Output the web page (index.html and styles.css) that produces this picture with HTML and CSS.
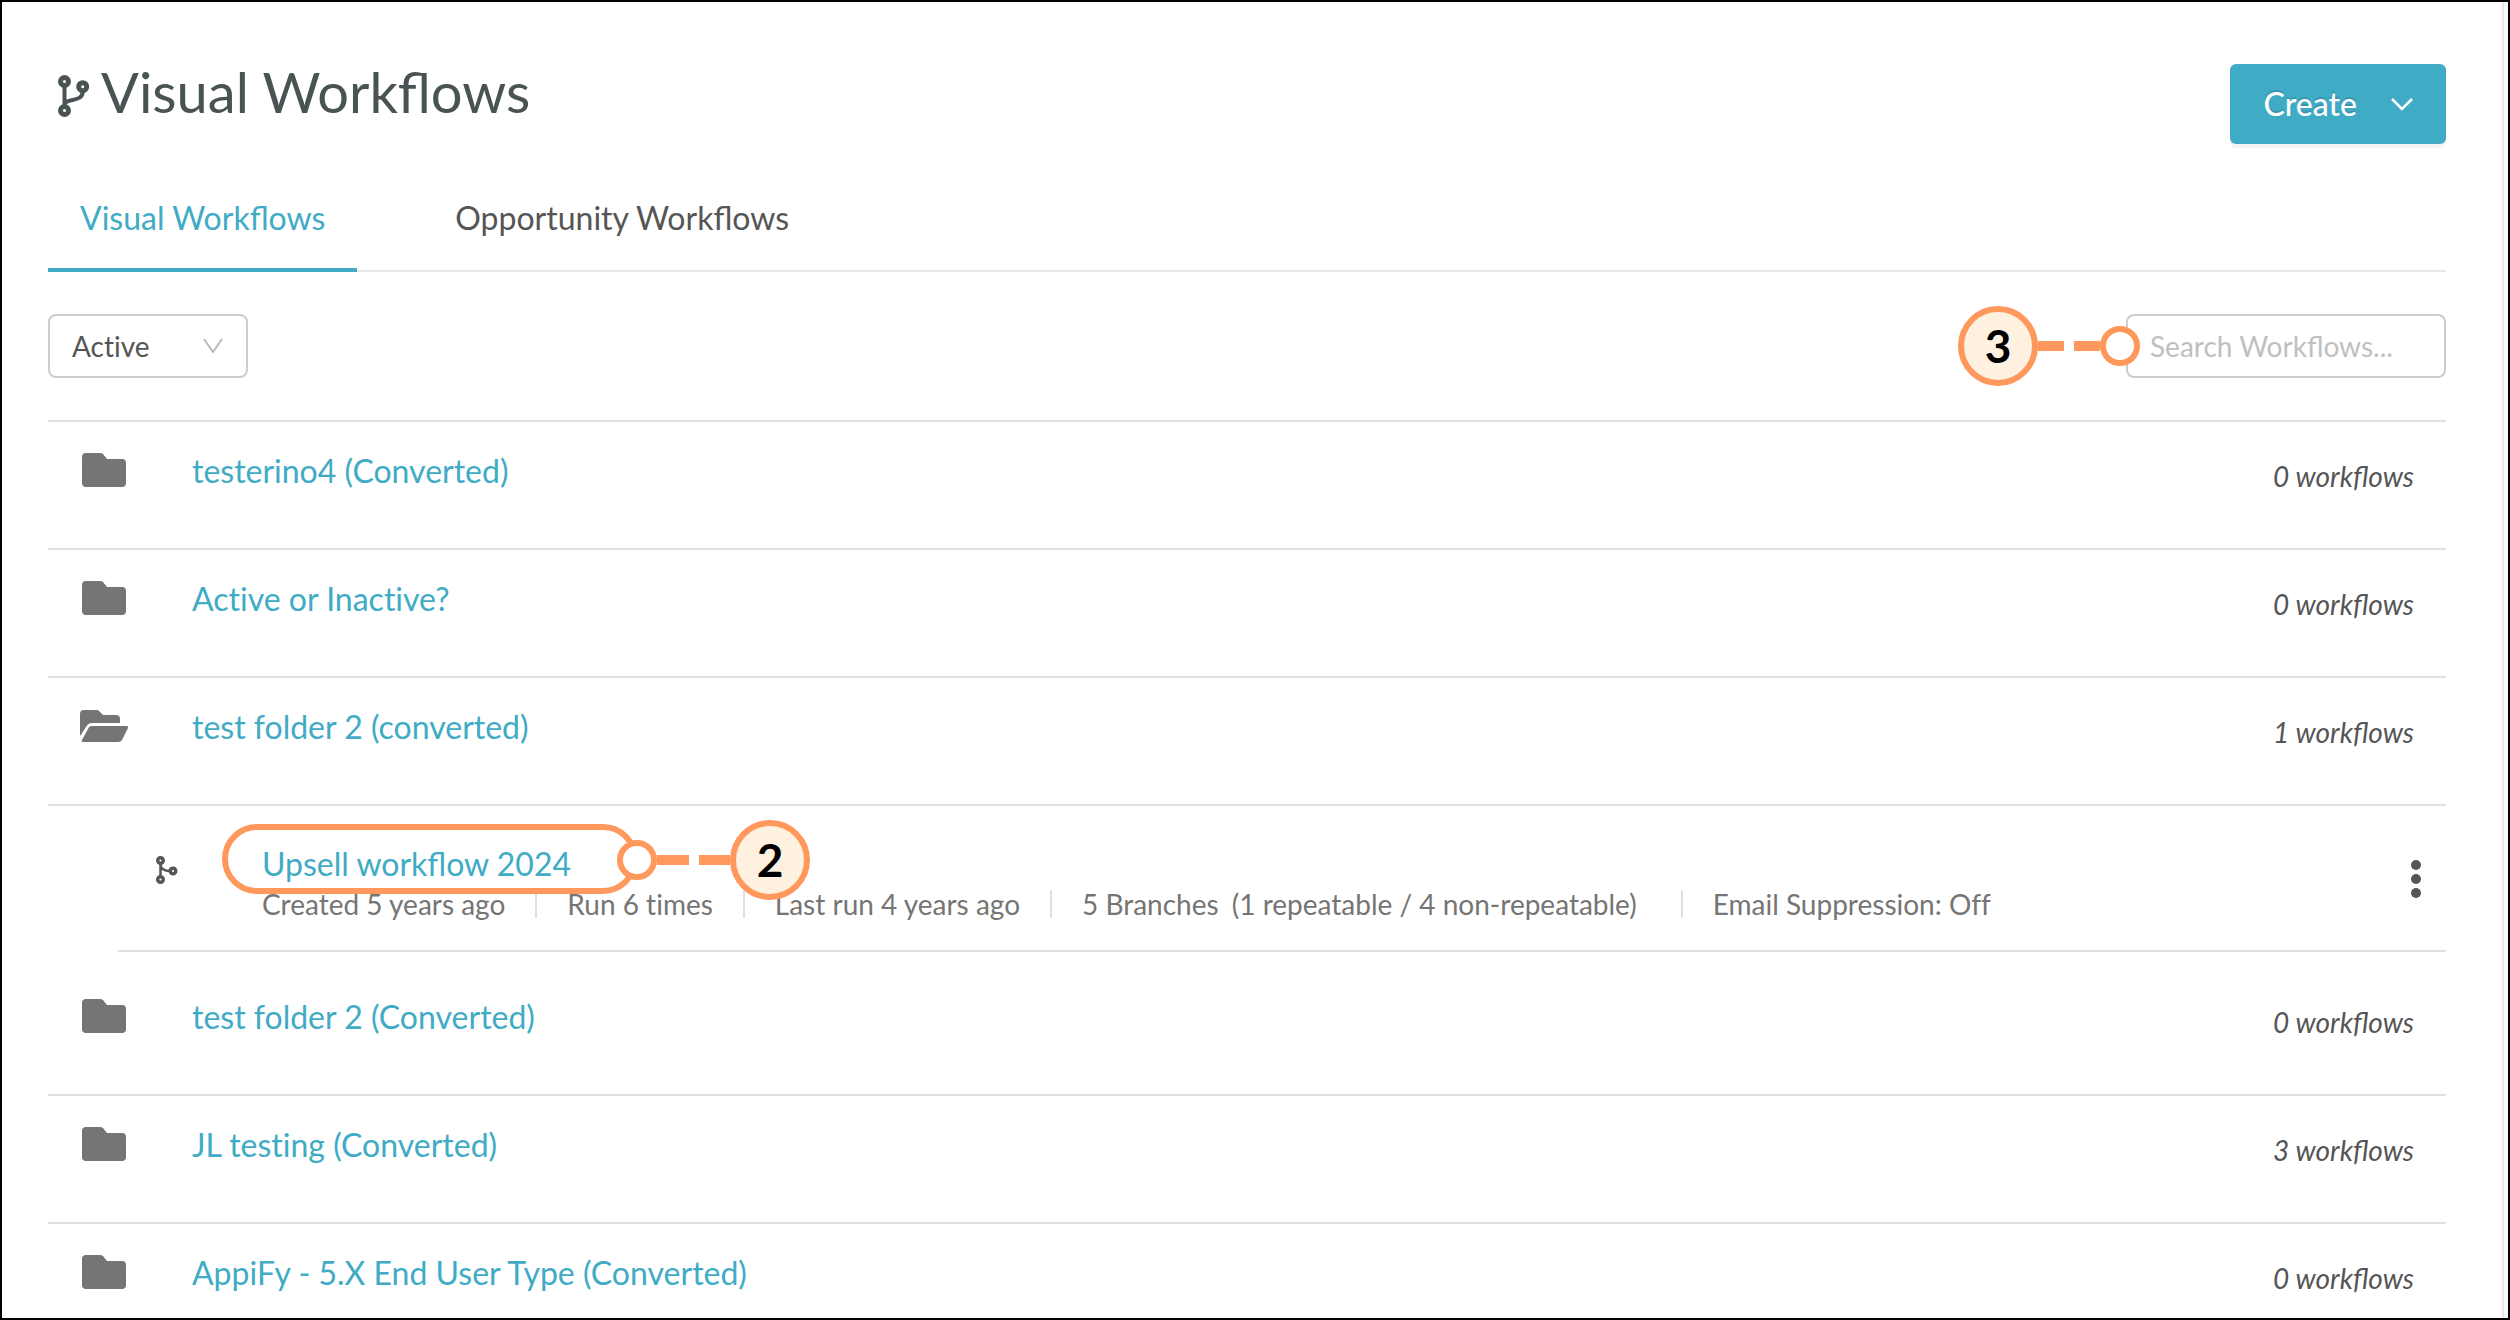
FILE: index.html
```html
<!DOCTYPE html>
<html lang="en">
<head>
<meta charset="utf-8">
<title>Visual Workflows</title>
<link rel="stylesheet" href="styles.css">
</head>
<body>
<svg class="sprite" aria-hidden="true">
  <symbol id="folder" viewBox="0 0 44 34"><path d="M4 0h14q2 0 3 1l4 5h15q4 0 4 4v20q0 4-4 4H4q-4 0-4-4V4q0-4 4-4z"/></symbol>
  <symbol id="folder-open" viewBox="0 0 48 32"><path d="M0 26V4q0-4 4-4h13q1 0 2 1l4 4h13q4 0 4 4v4H12q-4 0-6 4z"/><path d="M12 16h34q3 0 2 2l-6 12q-1 2-4 2H3q-2 0-1-2l6-11q1-3 4-3z"/></symbol>
</svg>
<main class="page">
  <header class="header">
    <h1 class="title">
      <svg class="title-icon" viewBox="0 0 32 42" aria-hidden="true"><g fill="none" stroke="currentColor"><circle cx="6.500" cy="6.500" r="4" stroke-width="5"/><circle cx="6.500" cy="35.500" r="4" stroke-width="5"/><circle cx="24.700" cy="11.700" r="4" stroke-width="5"/><path d="M6.500 11v20M24.700 16C25 27 12 23 6.500 28" stroke-width="4"/></g></svg>
      Visual Workflows
    </h1>
    <button class="create" type="button">Create
      <svg class="create-arrow" viewBox="0 0 24 14" aria-hidden="true"><path d="M2 2l10 10L22 2" fill="none" stroke="currentColor" stroke-width="2.500"/></svg>
    </button>
  </header>
  <nav class="tabs">
    <a class="tab tab-active" href="#visual">Visual Workflows</a>
    <a class="tab" href="#opportunity">Opportunity Workflows</a>
  </nav>
  <div class="filters">
    <div class="select-wrap">
      <select class="status" aria-label="Status"><option>Active</option><option>Inactive</option></select>
      <svg class="select-arrow" viewBox="0 0 22 16" aria-hidden="true"><path d="M2 1l9 13L20 1" fill="none" stroke="currentColor" stroke-width="2"/></svg>
    </div>
    <div class="search-wrap">
      <input class="search" type="text" aria-label="Search workflows" placeholder="Search Workflows...">
      <div class="callout callout-search"><span class="badge">3</span><span class="dashes"></span><span class="ring"></span></div>
    </div>
  </div>
  <ul class="list">
    <li class="row"><svg class="folder"><use href="#folder"/></svg><a class="name" href="#f1">testerino4 (Converted)</a><span class="count">0 workflows</span></li>
    <li class="row"><svg class="folder"><use href="#folder"/></svg><a class="name" href="#f2">Active or Inactive?</a><span class="count">0 workflows</span></li>
    <li class="row row-open"><svg class="folder"><use href="#folder-open"/></svg><a class="name" href="#f3">test folder 2 (converted)</a><span class="count">1 workflows</span></li>
    <li class="child">
      <svg class="branch" viewBox="0 0 22 28" aria-hidden="true"><g fill="none" stroke="currentColor"><circle cx="4.500" cy="4.500" r="2.800" stroke-width="3.400"/><circle cx="4.500" cy="23.500" r="2.800" stroke-width="3.400"/><circle cx="17" cy="15" r="2.800" stroke-width="3.400"/><path d="M4.500 7v14M4.500 8c0 5 4 7 10 7" stroke-width="2.500"/></g></svg>
      <div class="details">
        <a class="name" href="#w1">Upsell workflow 2024</a>
        <div class="meta">
          <span>Created 5 years ago</span><span>Run 6 times</span><span>Last run 4 years ago</span><span class="branches">5 Branches <span class="repeat">(1 repeatable / 4 non-repeatable)</span></span><span>Email Suppression: Off</span>
        </div>
        <div class="highlight"></div>
        <div class="callout callout-name"><span class="ring"></span><span class="dashes"></span><span class="badge">2</span></div>
      </div>
      <button class="more" type="button" aria-label="More actions"><i class="dot"></i><i class="dot"></i><i class="dot"></i></button>
    </li>
    <li class="row row-after"><svg class="folder"><use href="#folder"/></svg><a class="name" href="#f4">test folder 2 (Converted)</a><span class="count">0 workflows</span></li>
    <li class="row"><svg class="folder"><use href="#folder"/></svg><a class="name" href="#f5">JL testing (Converted)</a><span class="count">3 workflows</span></li>
    <li class="row"><svg class="folder"><use href="#folder"/></svg><a class="name" href="#f6">AppiFy - 5.X End User Type (Converted)</a><span class="count">0 workflows</span></li>
  </ul>
</main>
</body>
</html>
```
FILE: styles.css
```css
* { box-sizing: border-box; }
body {
  margin: 0;
  height: 100vh;
  overflow: hidden;
  display: flex;
  border: 2px solid #000;
  background: #fafafa;
  color: #555;
  font-family: Lato, sans-serif;
  font-size: 32px;
  line-height: 40px;
}
a { color: #40abc5; text-decoration: none; }
button, input, select { font: inherit; }
.sprite { position: absolute; width: 0; height: 0; }
.page {
  flex: 1;
  margin-right: 4px;
  padding: 58px 56px 0 46px;
  border-right: 2px solid #e8e8e8;
  background: #fff;
}
.header { display: flex; justify-content: space-between; align-items: flex-start; height: 116px; padding-top: 4px; }
.title {
  display: flex;
  align-items: center;
  gap: 11px;
  margin: 0;
  padding-left: 10px;
  color: #4a5354;
  font-size: 56px;
  font-weight: 400;
  line-height: 56px;
}
.title-icon { width: 32px; height: 42px; margin-top: 8px; }
.create {
  display: flex;
  align-items: center;
  gap: 33px;
  height: 80px;
  padding: 0 32px 0 33px;
  border: 0;
  border-radius: 6px;
  background: #40abc5;
  color: #fff;
  font-weight: 500;
  box-shadow: 0 4px 0 rgba(0, 0, 0, .045);
  text-shadow: 0 -2px 0 rgba(0, 0, 0, .12);
}
.create-arrow { width: 24px; height: 14px; }
.tabs { display: flex; gap: 66px; border-bottom: 2px solid #e8e8e8; }
.tab { height: 96px; margin-bottom: -2px; padding: 22px 32px; color: #555; }
.tab-active { border-bottom: 4px solid #40abc5; color: #40abc5; }
.filters { display: flex; justify-content: space-between; padding: 42px 0; font-size: 28px; }
.select-wrap, .search-wrap { position: relative; }
.status, .search {
  display: block;
  height: 64px;
  padding: 0 22px;
  border: 2px solid #ccc;
  border-radius: 8px;
  background: #fff;
  color: #555;
}
.status { width: 200px; appearance: none; font-variant-ligatures: none; }
.select-arrow { position: absolute; right: 24px; top: 24px; width: 22px; height: 16px; color: #bbb; }
.search { width: 320px; }
.search::placeholder { color: #bfbfbf; opacity: 1; }
.list { margin: 0; padding: 0; list-style: none; }
.row {
  display: grid;
  grid-template-columns: 112px 1fr auto;
  align-items: start;
  height: 128px;
  padding: 29px 32px 0;
  border-top: 2px solid #e0e0e0;
}
.row > .name { font-variant-ligatures: none; }
.row-open { height: 130px; border-bottom: 2px solid #e0e0e0; }
.folder { width: 48px; height: 34px; margin-top: 2px; fill: #757575; }
.count { padding-top: 7px; font-size: 28px; line-height: 36px; font-style: italic; }
.row-after { height: 142px; padding-top: 45px; border-top: 0; }
.child {
  display: flex;
  align-items: flex-start;
  margin-left: 70px;
  padding: 38px 0 28px 38px;
  border-bottom: 2px solid #e0e0e0;
}
.branch { width: 22px; height: 28px; margin-top: 12px; color: #555; }
.details { position: relative; flex: 1; margin-left: 84px; }
.details > .name { display: block; }
.meta {
  display: flex;
  align-items: center;
  height: 36px;
  margin-top: 2px;
  color: #757575;
  font-size: 28px;
  line-height: 28px;
  font-variant-ligatures: none;
}
.meta > span + span { margin-left: 30px; padding-left: 30px; border-left: 2px solid #e0e0e0; }
.meta > .branches { padding-right: 14px; }
.repeat { margin-left: 6px; }
.more {
  display: flex;
  flex-direction: column;
  gap: 4px;
  margin: 16px 25px 0 0;
  padding: 0;
  border: 0;
  background: none;
}
.dot { width: 10px; height: 10px; border-radius: 50%; background: #555; }
.highlight { position: absolute; left: -40px; top: -20px; width: 416px; height: 70px; border: 6px solid #ff985c; border-radius: 35px; }
.callout { position: absolute; display: flex; align-items: center; }
.callout-search { right: 306px; top: -8px; }
.callout-name { left: 355px; top: -24px; }
.badge {
  width: 80px;
  height: 80px;
  border: 6px solid #ff985c;
  border-radius: 50%;
  background: #fff1e0;
  color: #000;
  font: 700 46px/68px Lato, sans-serif;
  text-align: center;
}
.dashes { display: flex; gap: 10px; width: 62px; height: 10px; }
.dashes::before, .dashes::after { content: ""; flex: 1; background: #ff985c; }
.callout-name .dashes { width: 73px; }
.ring { width: 40px; height: 40px; border: 6px solid #ff985c; border-radius: 50%; background: #fff; }
```
